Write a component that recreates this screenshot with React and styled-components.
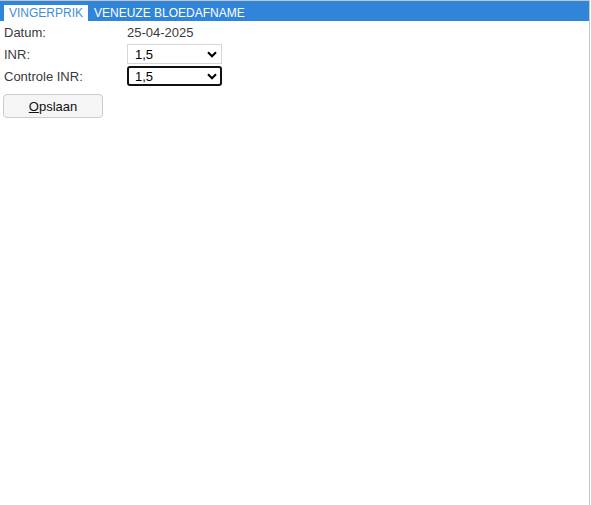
import React from "react";
import styled, { createGlobalStyle } from "styled-components";

const GlobalStyle = createGlobalStyle`
  html, body {
    margin: 0;
    padding: 0;
    background: #ffffff;
  }
  body {
    font-family: "Liberation Sans", Arial, sans-serif;
    font-size: 13px;
    color: #333333;
  }
`;

const Frame = styled.div`
  box-sizing: border-box;
  width: 590px;
  height: 505px;
  border-top: 1px solid #c4c4c4;
  border-right: 1px solid #c4c4c4;
`;

const TabBar = styled.div`
  display: flex;
  align-items: flex-end;
  height: 20px;
  padding-left: 3px;
  background: #3185d8;
`;

const Tab = styled.div`
  margin-left: 1px;
  padding: 0 5px;
  height: 16px;
  line-height: 16px;
  font-size: 12px;
  white-space: nowrap;
  background: ${(p) => (p.$active ? "#ffffff" : "transparent")};
  color: ${(p) => (p.$active ? "#3f8ddd" : "#ffffff")};
  cursor: pointer;
`;

const Form = styled.div`
  padding: 0 4px;
`;

const Row = styled.div`
  display: grid;
  grid-template-columns: 123px auto;
  align-items: center;
  height: 22px;
`;

const Label = styled.span`
  color: #3a3a3a;
`;

const Value = styled.span`
  color: #3a3a3a;
`;

const SelectWrap = styled.div`
  position: relative;
  width: 95px;
  height: 20px;
`;

const Select = styled.select`
  appearance: none;
  box-sizing: border-box;
  width: 100%;
  height: 100%;
  margin: 0;
  padding: 0 0 0 ${(p) => (p.$focused ? "6px" : "7px")};
  font-family: "Liberation Sans", Arial, sans-serif;
  font-size: 13px;
  color: #000000;
  background: #ffffff;
  border: ${(p) => (p.$focused ? "2px solid #111111" : "1px solid #d6d6d6")};
  border-radius: ${(p) => (p.$focused ? "3px" : "0")};
  outline: none;
`;

const Chevron = styled.svg`
  position: absolute;
  right: 5px;
  top: 7px;
  pointer-events: none;
`;

const Button = styled.button`
  box-sizing: border-box;
  width: 100px;
  height: 24px;
  margin: 7px 0 0 -1px;
  padding: 0;
  font-family: "Liberation Sans", Arial, sans-serif;
  font-size: 13px;
  color: #111111;
  background: #f5f5f5;
  border: 1px solid #cccccc;
  border-radius: 4px;
  cursor: pointer;

  u {
    text-decoration: underline;
  }
`;

const InrSelect = ({ focused }) => (
  <SelectWrap>
    <Select $focused={focused} defaultValue="1,5">
      <option>1,0</option>
      <option>1,5</option>
      <option>2,0</option>
      <option>2,5</option>
      <option>3,0</option>
    </Select>
    <Chevron width="10" height="7" viewBox="0 0 10 7">
      <path d="M1 1.3 L5 5.2 L9 1.3" fill="none" stroke="#000" strokeWidth="2.1" />
    </Chevron>
  </SelectWrap>
);

const App = () => (
  <>
    <GlobalStyle />
    <Frame>
      <TabBar>
        <Tab $active>VINGERPRIK</Tab>
        <Tab>VENEUZE BLOEDAFNAME</Tab>
      </TabBar>
      <Form>
        <Row>
          <Label>Datum:</Label>
          <Value>25-04-2025</Value>
        </Row>
        <Row>
          <Label>INR:</Label>
          <InrSelect />
        </Row>
        <Row>
          <Label>Controle INR:</Label>
          <InrSelect focused />
        </Row>
        <Button>
          <u>O</u>pslaan
        </Button>
      </Form>
    </Frame>
  </>
);

export default App;
